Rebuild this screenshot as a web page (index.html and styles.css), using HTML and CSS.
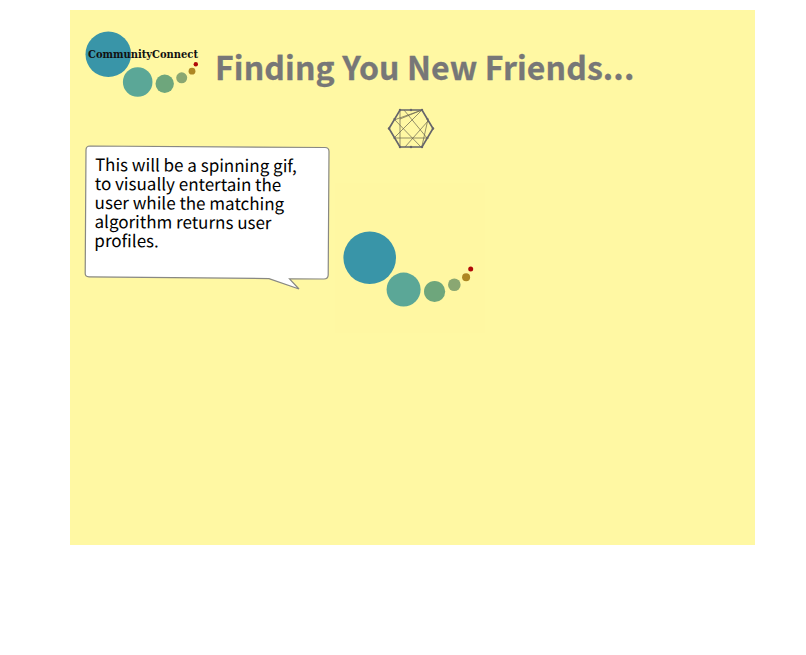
FILE: index.html
```html
<!DOCTYPE html>
<html lang="en">
<head>
<meta charset="utf-8">
<title>CommunityConnect</title>
<link rel="stylesheet" href="styles.css">
</head>
<body>
<main class="screen">
  <header class="header">
    <svg class="logo" width="115" height="68" viewBox="85 30 115 68">
      <circle cx="108.300" cy="54.300" r="22.800" fill="#3995a8"/>
      <circle cx="137.700" cy="82" r="14.800" fill="#5ba797"/>
      <circle cx="164.700" cy="83.700" r="9.200" fill="#6ea67c"/>
      <circle cx="181.700" cy="77.800" r="5.500" fill="#8aa772"/>
      <circle cx="192" cy="71.200" r="3.400" fill="#ad8724"/>
      <circle cx="195.800" cy="64.200" r="2.200" fill="#b00808"/>
      <text class="brand" x="88" y="58.300" textLength="110" lengthAdjust="spacingAndGlyphs">CommunityConnect</text>
    </svg>
    <h1 class="title">Finding You New Friends...</h1>
  </header>
  <svg class="spinner" width="48" height="44" viewBox="387 106 48 44">
    <path d="M400 110V147M394 120L422 110M394 119L421 147M394 138H427M394 138L422 110M405 147L428 121M404 110L427 138M428 119L422 146M400 119L422 110" fill="none" stroke="#66624f" stroke-width=".7"/>
    <path d="M400 110H422L433 128.500L422 147H400L389 128.500Z" fill="none" stroke="#66656a" stroke-width="1.700"/>
    <g fill="#66656a">
      <circle cx="400" cy="110" r="1.200"/><circle cx="411" cy="110" r="1.200"/><circle cx="422" cy="110" r="1.200"/>
      <circle cx="433" cy="128.500" r="1.200"/><circle cx="422" cy="147" r="1.200"/><circle cx="411" cy="147" r="1.200"/>
      <circle cx="400" cy="147" r="1.200"/><circle cx="389" cy="128.500" r="1.200"/><circle cx="394.500" cy="119" r="1.100"/>
      <circle cx="427.500" cy="119" r="1.100"/><circle cx="394.500" cy="138" r="1.100"/><circle cx="427.500" cy="138" r="1.100"/>
    </g>
  </svg>
  <section class="content">
    <div class="bubble">
      <svg class="outline" width="248" height="148" viewBox="83 144 248 148">
        <path d="M90 146L325 147.500Q329 147.500 329 151.500L328.200 275Q328 279 324 279L289.500 278.800L299 289L269 278.600L89 276.800Q85 276.800 85.200 273L86 150Q86 146 90 146Z" fill="#fff" stroke="#888883" stroke-width="1.200"/>
      </svg>
      <p class="message">This will be a spinning gif,<br>to visually entertain the<br>user while the matching<br>algorithm returns user<br>profiles.</p>
    </div>
    <svg class="dots" width="150" height="150" viewBox="335 183 150 150">
      <rect class="haze" x="335" y="183" width="150" height="150"/>
      <circle cx="369.700" cy="257.800" r="26.300" fill="#3995a8"/>
      <circle cx="403.600" cy="289.600" r="17" fill="#5ba797"/>
      <circle cx="434.600" cy="291.500" r="10.600" fill="#6ea67c"/>
      <circle cx="454.300" cy="284.800" r="6.300" fill="#8aa772"/>
      <circle cx="466.100" cy="277.200" r="4" fill="#ad8724"/>
      <circle cx="470.700" cy="269" r="2.500" fill="#b00808"/>
    </svg>
  </section>
</main>
</body>
</html>
```
FILE: styles.css
```css
body {
  margin: 0;
  background: #fff;
  font-family: "Noto Sans CJK SC", "Noto Sans", sans-serif;
}
.screen {
  box-sizing: border-box;
  width: 685px;
  height: 535px;
  margin: 10px 0 0 70px;
  padding-top: 20px;
  background: #fff8a3;
}
svg {
  display: block;
  flex: none;
}
.logo {
  overflow: visible;
}
.header {
  display: flex;
  height: 76px;
  padding-left: 15px;
  gap: 15px;
}
.haze {
  fill: #fff7a2;
}
.brand {
  font: bold 10.6px "DejaVu Serif", serif;
  fill: #111;
}
.title {
  margin: 13px 0 0;
  font-size: 32px;
  font-weight: 700;
  line-height: 47px;
  letter-spacing: 0.12px;
  color: #777;
  -webkit-text-stroke: 0.3px #777;
  white-space: nowrap;
}
.spinner {
  margin-left: 317px;
}
.content {
  display: flex;
  align-items: flex-start;
  padding-left: 13px;
  gap: 4px;
  margin-top: -6px;
}
.bubble {
  display: grid;
}
.outline,
.message {
  grid-area: 1 / 1;
}
.message {
  margin: 10px 0 0 12px;
  font-size: 17px;
  line-height: 19px;
  color: #000;
  white-space: nowrap;
  transform: rotate(0.4deg);
  transform-origin: 0 0;
}
.dots {
  margin-top: 39px;
}
```
